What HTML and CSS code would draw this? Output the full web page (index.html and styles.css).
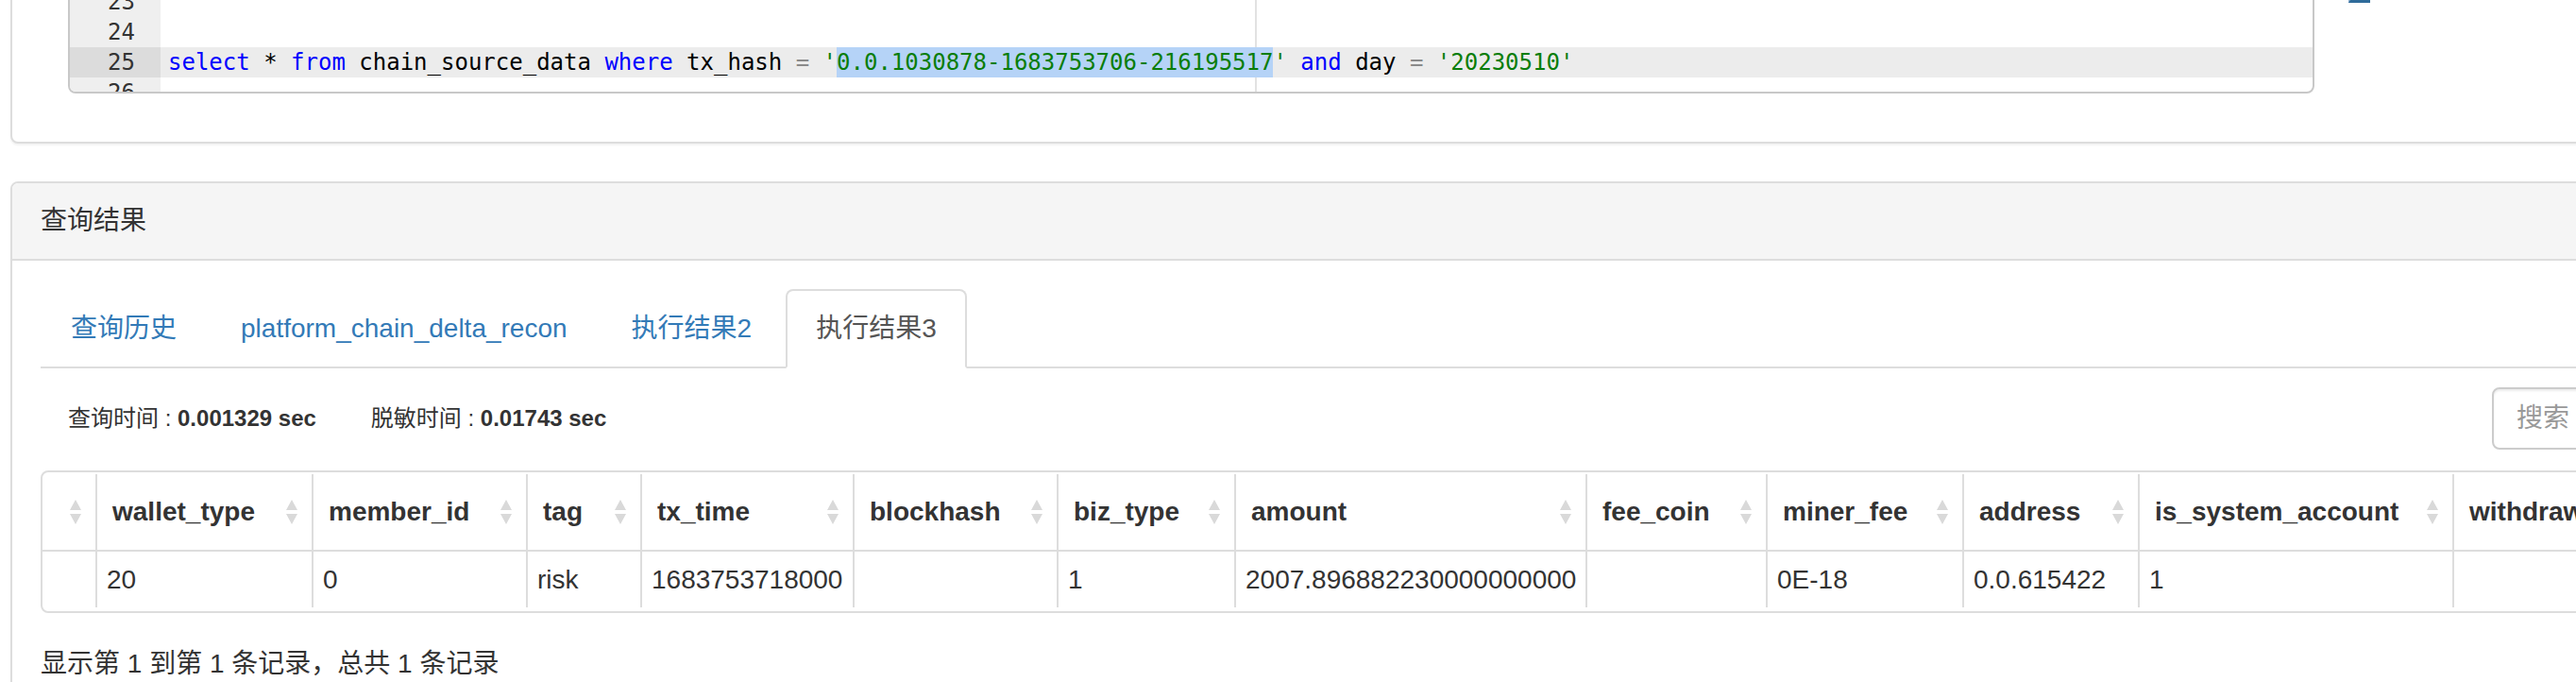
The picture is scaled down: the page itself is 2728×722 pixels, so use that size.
FILE: index.html
```html
<!DOCTYPE html>
<html lang="zh-CN">
<head>
<meta charset="utf-8">
<title>查询结果</title>
<link rel="stylesheet" href="styles.css">
</head>
<body>
<div class="page">
  <section class="panel panel-editor">
    <div class="editor-row">
      <div class="codebox">
        <div class="cm-line"><span class="cm-gutter">23</span><span class="cm-code"></span></div>
        <div class="cm-line"><span class="cm-gutter">24</span><span class="cm-code"></span></div>
        <div class="cm-line active"><span class="cm-gutter">25</span><span class="cm-code"><span class="kw">select</span> * <span class="kw">from</span> chain_source_data <span class="kw">where</span> tx_hash <span class="op">=</span> <span class="str">'<span class="sel">0.0.1030878-1683753706-216195517</span>'</span> <span class="kw">and</span> day <span class="op">=</span> <span class="str">'20230510'</span></span></div>
        <div class="cm-line"><span class="cm-gutter">26</span><span class="cm-code"></span></div>
      </div>
      <div class="side-tools"><span class="tool-btn"></span></div>
    </div>
  </section>

  <section class="panel panel-result">
    <div class="panel-heading">查询结果</div>
    <div class="panel-body">
      <ul class="nav-tabs">
        <li><a href="#">查询历史</a></li>
        <li><a href="#">platform_chain_delta_recon</a></li>
        <li><a href="#">执行结果2</a></li>
        <li class="active"><a href="#">执行结果3</a></li>
      </ul>

      <div class="toolbar">
        <div class="stats">
          <span>查询时间 : <b>0.001329 sec</b></span>
          <span>脱敏时间 : <b>0.01743 sec</b></span>
        </div>
        <input class="search-input" type="text" placeholder="搜索">
      </div>

      <div class="table-wrap">
        <table class="result-table">
          <thead>
            <tr>
              <th class="c0"><div class="th-inner end"><svg class="sort" viewBox="0 0 14 28" width="14" height="28"><path d="M7 1 L13 12 H1 Z M1 16 H13 L7 27 Z"/></svg></div></th>
              <th class="c1"><div class="th-inner">wallet_type<svg class="sort" viewBox="0 0 14 28" width="14" height="28"><path d="M7 1 L13 12 H1 Z M1 16 H13 L7 27 Z"/></svg></div></th>
              <th class="c2"><div class="th-inner">member_id<svg class="sort" viewBox="0 0 14 28" width="14" height="28"><path d="M7 1 L13 12 H1 Z M1 16 H13 L7 27 Z"/></svg></div></th>
              <th class="c3"><div class="th-inner">tag<svg class="sort" viewBox="0 0 14 28" width="14" height="28"><path d="M7 1 L13 12 H1 Z M1 16 H13 L7 27 Z"/></svg></div></th>
              <th class="c4"><div class="th-inner">tx_time<svg class="sort" viewBox="0 0 14 28" width="14" height="28"><path d="M7 1 L13 12 H1 Z M1 16 H13 L7 27 Z"/></svg></div></th>
              <th class="c5"><div class="th-inner">blockhash<svg class="sort" viewBox="0 0 14 28" width="14" height="28"><path d="M7 1 L13 12 H1 Z M1 16 H13 L7 27 Z"/></svg></div></th>
              <th class="c6"><div class="th-inner">biz_type<svg class="sort" viewBox="0 0 14 28" width="14" height="28"><path d="M7 1 L13 12 H1 Z M1 16 H13 L7 27 Z"/></svg></div></th>
              <th class="c7"><div class="th-inner">amount<svg class="sort" viewBox="0 0 14 28" width="14" height="28"><path d="M7 1 L13 12 H1 Z M1 16 H13 L7 27 Z"/></svg></div></th>
              <th class="c8"><div class="th-inner">fee_coin<svg class="sort" viewBox="0 0 14 28" width="14" height="28"><path d="M7 1 L13 12 H1 Z M1 16 H13 L7 27 Z"/></svg></div></th>
              <th class="c9"><div class="th-inner">miner_fee<svg class="sort" viewBox="0 0 14 28" width="14" height="28"><path d="M7 1 L13 12 H1 Z M1 16 H13 L7 27 Z"/></svg></div></th>
              <th class="c10"><div class="th-inner">address<svg class="sort" viewBox="0 0 14 28" width="14" height="28"><path d="M7 1 L13 12 H1 Z M1 16 H13 L7 27 Z"/></svg></div></th>
              <th class="c11"><div class="th-inner">is_system_account<svg class="sort" viewBox="0 0 14 28" width="14" height="28"><path d="M7 1 L13 12 H1 Z M1 16 H13 L7 27 Z"/></svg></div></th>
              <th class="c12"><div class="th-inner">withdraw_address<svg class="sort" viewBox="0 0 14 28" width="14" height="28"><path d="M7 1 L13 12 H1 Z M1 16 H13 L7 27 Z"/></svg></div></th>
            </tr>
          </thead>
          <tbody>
            <tr>
              <td></td>
              <td>20</td>
              <td>0</td>
              <td>risk</td>
              <td>1683753718000</td>
              <td></td>
              <td>1</td>
              <td>2007.896882230000000000</td>
              <td></td>
              <td>0E-18</td>
              <td>0.0.615422</td>
              <td>1</td>
              <td></td>
            </tr>
          </tbody>
        </table>
      </div>

      <div class="pagination-detail">显示第 1 到第 1 条记录，总共 1 条记录</div>
    </div>
  </section>
</div>
</body>
</html>
```

FILE: styles.css
```css
html, body {
  margin: 0;
  padding: 0;
  background: #fff;
}

body {
  overflow: hidden;
  font-family: "Liberation Sans", "Noto Sans CJK SC", sans-serif;
  font-size: 28px;
  line-height: 40px;
  color: #333;
}

.page {
  width: 2960px;
  margin-left: 11px;
}

/* ---------- panels ---------- */
.panel {
  background: #fff;
  border: 2px solid #ddd;
  border-radius: 8px;
  box-shadow: 0 2px 2px rgba(0, 0, 0, 0.05);
  margin-bottom: 40px;
}

.panel-editor {
  margin-top: -48px;
  padding: 30px 0 51px 59px;
}

.editor-row {
  display: flex;
  align-items: flex-start;
}

/* ---------- code editor ---------- */
.codebox {
  width: 2379px;
  height: 115px;
  box-sizing: border-box;
  border: 2px solid #c8c8c8;
  border-radius: 8px;
  overflow: hidden;
  background: #fff;
  font-family: "DejaVu Sans Mono", monospace;
  font-size: 24px;
}

.cm-line {
  display: flex;
  height: 32px;
  line-height: 32px;
}

.cm-gutter {
  flex: none;
  width: 96px;
  box-sizing: border-box;
  padding-right: 27px;
  text-align: right;
  background: #efefef;
  color: #333;
}

.cm-code {
  flex: 1;
  padding-left: 8px;
  white-space: pre;
  color: #000;
  background: linear-gradient(to right, transparent 1159px, #e2e2e2 1159px, #e2e2e2 1161px, transparent 1161px);
}

.cm-line.active .cm-gutter {
  background: #dcdcdc;
}

.cm-line.active .cm-code {
  background: #ececec;
}

.kw {
  color: #0000ff;
}

.str {
  color: #0a7d0a;
}

.op {
  color: #8a8a8a;
}

.sel {
  display: inline-block;
  height: 32px;
  background: #b5d3f7;
}

.side-tools {
  margin-left: 36px;
}

.tool-btn {
  display: block;
  width: 23px;
  height: 19px;
  box-sizing: border-box;
  border-left: 2px solid #8fb1d0;
  border-bottom: 3px solid #2f6b9a;
}

/* ---------- result panel ---------- */
.panel-heading {
  background: #f5f5f5;
  border-bottom: 2px solid #ddd;
  border-radius: 6px 6px 0 0;
  padding: 20px 30px;
  line-height: 40px;
}

.panel-body {
  padding: 30px;
}

.nav-tabs {
  display: flex;
  list-style: none;
  margin: 0;
  padding: 0;
  border-bottom: 2px solid #ddd;
}

.nav-tabs li {
  margin-bottom: -2px;
  margin-right: 4px;
}

.nav-tabs a {
  display: block;
  padding: 20px 30px;
  line-height: 40px;
  border: 2px solid transparent;
  border-radius: 8px 8px 0 0;
  color: #337ab7;
  text-decoration: none;
}

.nav-tabs li.active a {
  color: #555;
  background: #fff;
  border-color: #ddd #ddd transparent;
}

.toolbar {
  display: flex;
  align-items: center;
  justify-content: space-between;
  margin: 20px 0 22px;
}

.stats {
  display: flex;
  gap: 58px;
  padding-left: 29px;
  font-size: 24px;
  line-height: 34px;
}

.search-input {
  width: 300px;
  height: 66px;
  box-sizing: border-box;
  border: 2px solid #ccc;
  border-radius: 8px;
  padding: 0 24px;
  font-family: "Liberation Sans", "Noto Sans CJK SC", sans-serif;
  font-size: 28px;
  color: #555;
  box-shadow: inset 0 2px 2px rgba(0, 0, 0, 0.075);
  outline: none;
}

.search-input::placeholder {
  color: #999;
}

/* ---------- table ---------- */
.table-wrap {
  border: 2px solid #ddd;
  border-radius: 8px;
  padding: 2px 0 4px;
  overflow: hidden;
}

.result-table {
  width: 100%;
  table-layout: fixed;
  border-collapse: separate;
  border-spacing: 0;
}

.result-table th,
.result-table td {
  box-sizing: border-box;
  border-left: 2px solid #ddd;
  white-space: nowrap;
  overflow: hidden;
}

.result-table th:first-child,
.result-table td:first-child {
  border-left: none;
}

.result-table th {
  height: 82px;
  padding: 0;
  border-bottom: 2px solid #ddd;
  text-align: left;
  font-weight: bold;
  vertical-align: middle;
}

.result-table td {
  height: 59px;
  padding: 0 10px;
  vertical-align: middle;
}

.th-inner {
  display: flex;
  align-items: center;
  justify-content: space-between;
  padding: 0 14px 0 16px;
}

.th-inner.end {
  justify-content: flex-end;
}

.sort {
  flex: none;
  fill: #d9d9d9;
}

.c0 { width: 56px; }
.c1 { width: 229px; }
.c2 { width: 227px; }
.c3 { width: 121px; }
.c4 { width: 225px; }
.c5 { width: 216px; }
.c6 { width: 188px; }
.c7 { width: 372px; }
.c8 { width: 191px; }
.c9 { width: 208px; }
.c10 { width: 186px; }
.c11 { width: 333px; }

.pagination-detail {
  margin-top: 34px;
  line-height: 40px;
}
```
